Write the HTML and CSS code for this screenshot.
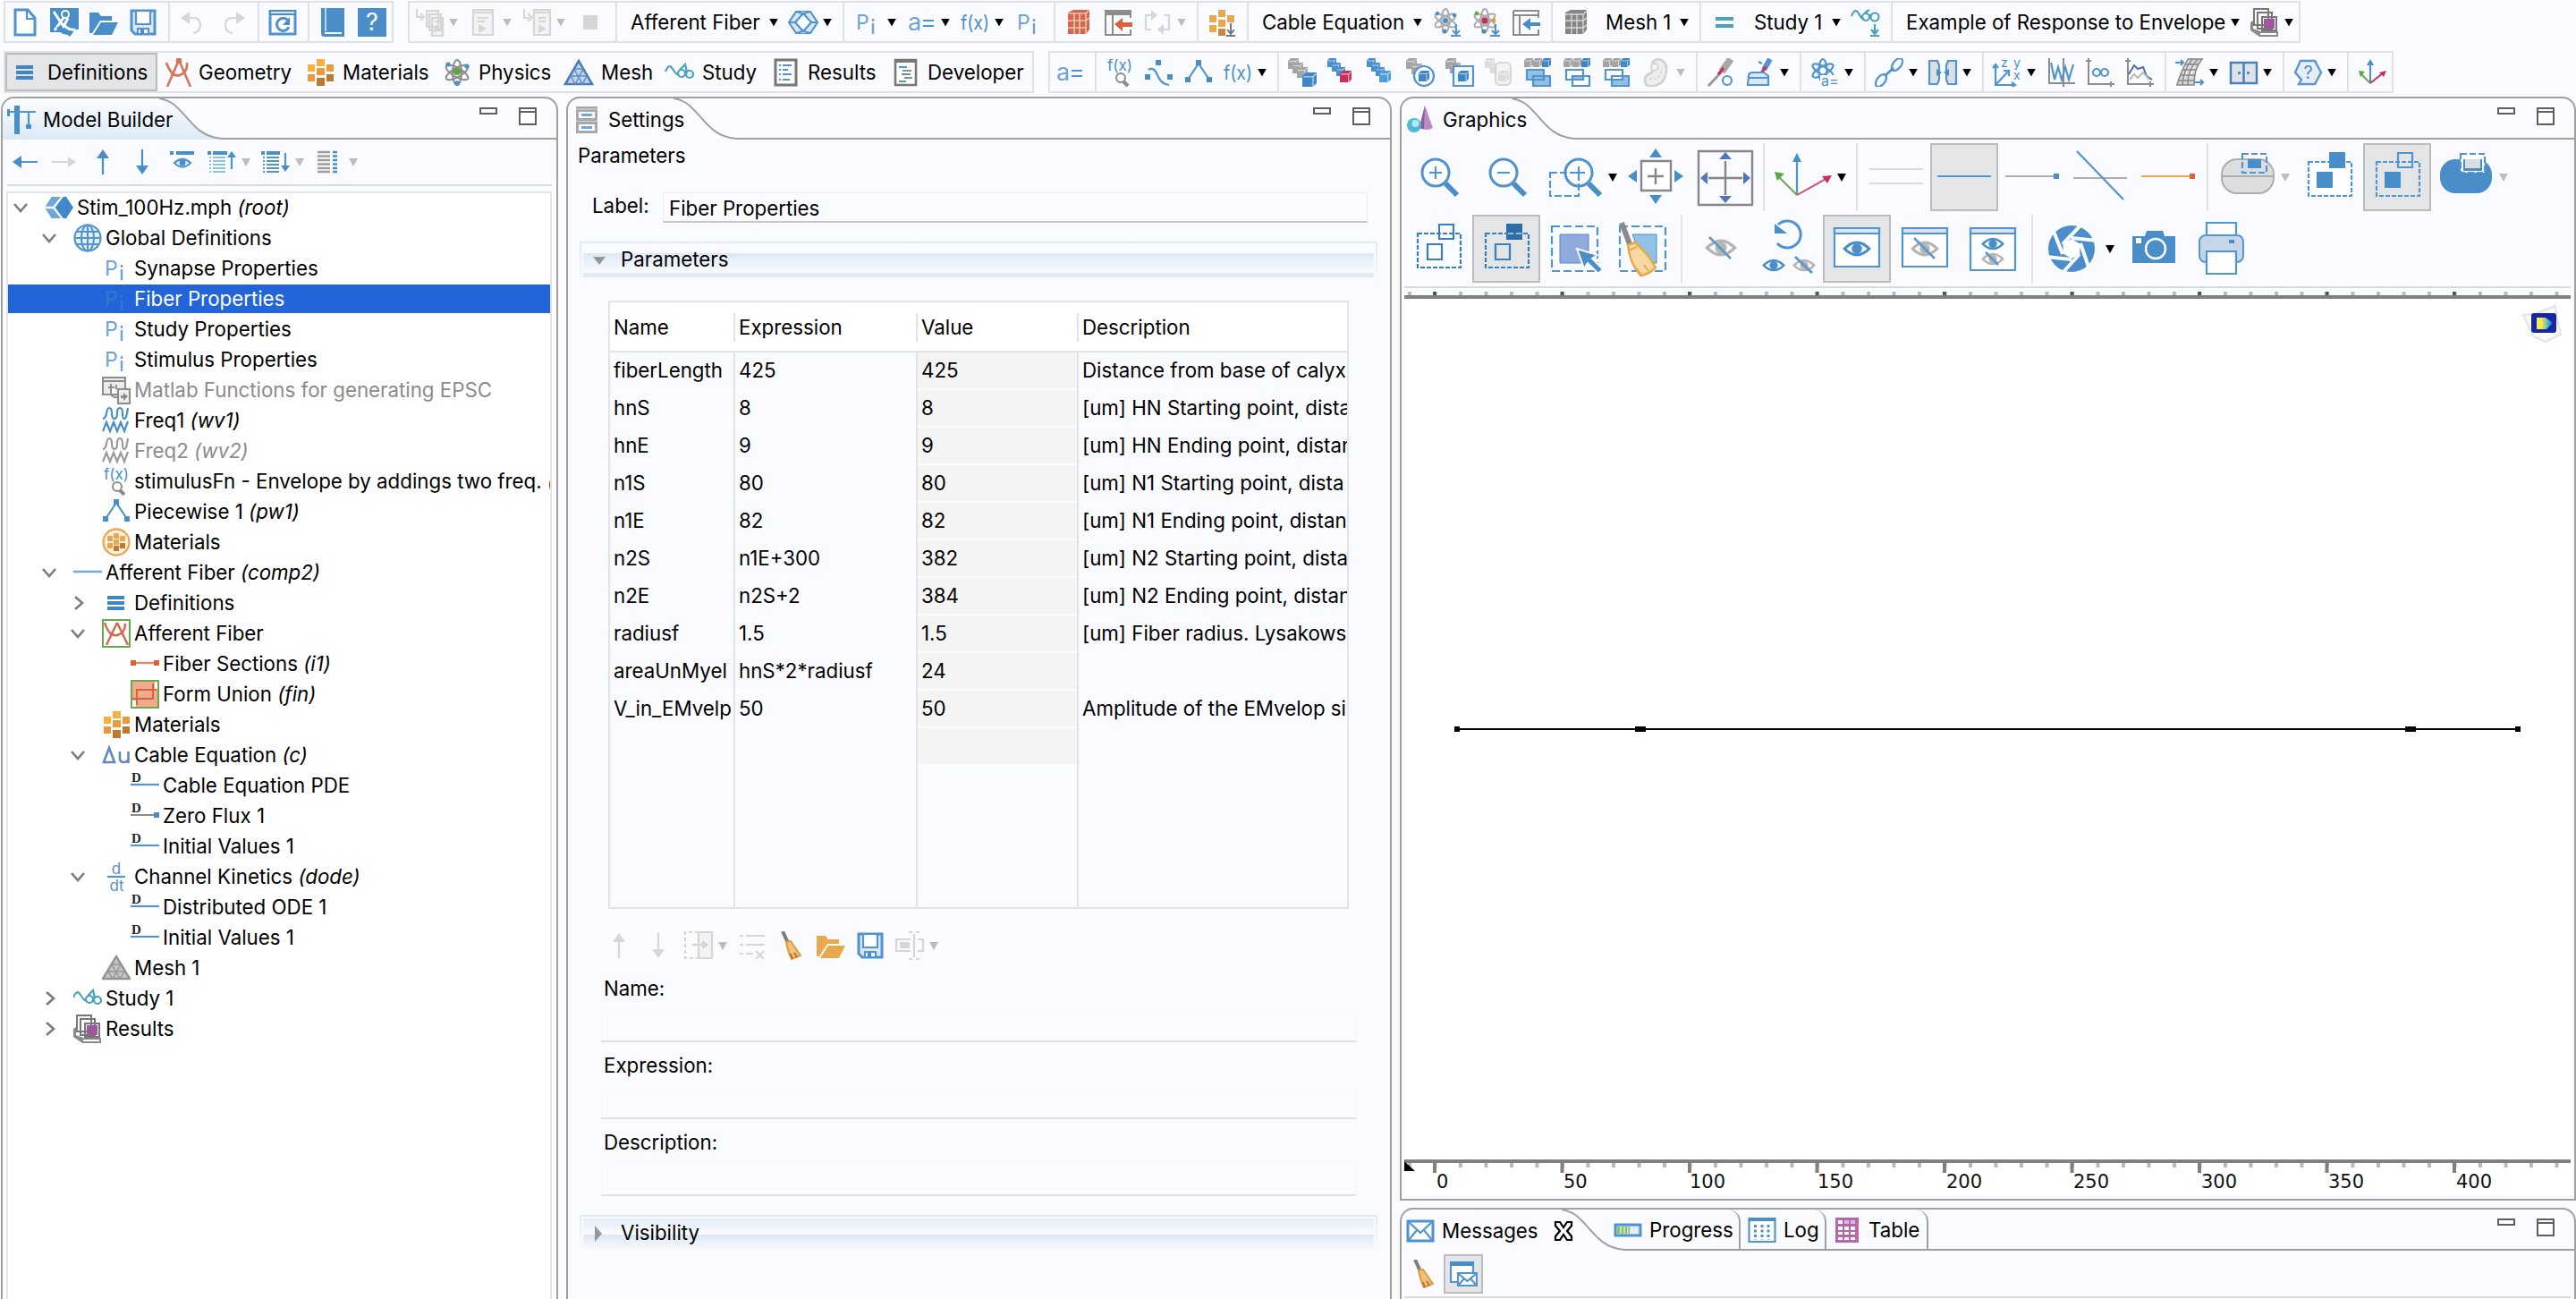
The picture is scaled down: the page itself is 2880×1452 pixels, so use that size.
FILE: index.html
```html
<!DOCTYPE html>
<html lang="en">
<head>
<meta charset="utf-8">
<title>Model Builder</title>
<link rel="stylesheet" href="styles.css">
</head>
<body>
<svg class="defs" aria-hidden="true">
  <symbol id="new" viewBox="0 0 32 32"><path class="s3 w" d="M5 2h14l8 9v19H5z"/><path class="s2" d="M18 2v10h9"/></symbol>
  <symbol id="builder" viewBox="0 0 32 32"><path class="b" d="M0 0h32v24h-4l-6 8-6-5H0z"/><circle cx="17" cy="7" r="4" fill="none" stroke="#fff" stroke-width="2"/><path d="M4 4l12 18M15 11L5 25M20 11l-4 8q4 6 12 5" fill="none" stroke="#fff" stroke-width="3"/><path d="M9 21q5 9 15 6" fill="none" stroke="#4a8ec9" stroke-width="4"/></symbol>
  <symbol id="open" viewBox="0 0 32 32"><path fill="currentColor" d="M0 5h10l3 4h12v5H12L3 28H0z"/><path fill="currentColor" d="M13 16h19l-7 14H4z"/></symbol>
  <symbol id="save" viewBox="0 0 32 32"><path class="s3" fill="#dbe8f4" d="M3 3h26v26H7l-4-4z"/><path class="s2 w" d="M8 3h16v15H8zM10 23h12v6H10z"/><path class="b" d="M13 24h4v5h-4z"/></symbol>
  <symbol id="undo" viewBox="0 0 32 32"><path class="dg2" d="M4 11h12q8 0 8 8t-8 9"/><path class="dg" d="M12 4v14L2 11z"/></symbol>
  <symbol id="redo" viewBox="0 0 32 32"><path class="dg2" d="M28 11H16q-8 0-8 8t8 9"/><path class="dg" d="M20 4v14l10-7z"/></symbol>
  <symbol id="refresh" viewBox="0 0 32 32"><path class="s3 w" d="M2 4h28v25H2z"/><path class="b" d="M1 2h30v6H1z"/><path stroke="#dbe8f4" stroke-width="2" d="M3 5h26"/><path class="s3" d="M22 14a7 7 0 1 0 1 7"/><path class="b" d="M24 10v9h-8z"/></symbol>
  <symbol id="book" viewBox="0 0 32 32"><path class="b" d="M3 0h26v32H6q-3 0-3-4z"/><path stroke="#b9d5ee" stroke-width="2" d="M8 0v26"/><path stroke="#fff" stroke-width="2" d="M7 28h19"/></symbol>
  <symbol id="help" viewBox="0 0 32 32"><path class="b" d="M0 0h32v32H0z"/><text x="16" y="25" text-anchor="middle" font-size="27" fill="#fff">?</text></symbol>
  <symbol id="runstack" viewBox="0 0 32 32"><path class="dg2 f" d="M13 3h13v18H13zM16 7h13v18H16zM19 11h12v20H19z"/><path class="dg2" d="M2 1v9h6M6 6l4 4-4 4"/><path class="dg" d="M22 19l6 4-6 5z"/><path class="dg2" d="M22 15h6"/></symbol>
  <symbol id="rundoc" viewBox="0 0 32 32"><path class="dg2 f" d="M5 2h22v28H5z"/><path class="dg2" d="M5 5h22M10 11h12M10 15h8"/><path class="dg" d="M11 18l9 5-9 5z"/></symbol>
  <symbol id="rundoc2" viewBox="0 0 32 32"><path class="dg2 f" d="M13 2h18v28H13z"/><path class="dg2" d="M13 5h18M18 11h8M18 15h8M2 1v10h6M6 6l5 5-5 4"/><path class="dg" d="M18 18l9 5-9 5z"/></symbol>
  <symbol id="stop" viewBox="0 0 32 32"><path class="dg" d="M8 8h16v16H8z"/></symbol>
  <symbol id="comp" viewBox="0 0 32 32"><path class="s2" fill="#eaf2fa" d="M8 4h16l8 12-8 12H8L0 16z"/><path class="s2 w" d="M16 6l9 10-9 10-9-10zM8 4l8 2 8-2M8 28l8-2 8 2M0 16h7M25 16h7"/></symbol>
  <symbol id="pi" viewBox="0 0 32 32"><text x="3" y="24" font-size="23" fill="#6fa3d6">P</text><path stroke="#6fa3d6" stroke-width="2.4" d="M22 17v12M22 12v3"/></symbol>
  <symbol id="pisel" viewBox="0 0 32 32"><text x="3" y="24" font-size="23" fill="#3577cf">P</text><path stroke="#3577cf" stroke-width="2.4" d="M22 17v12M22 12v3"/></symbol>
  <symbol id="aeq" viewBox="0 0 32 32"><text x="1" y="25" font-size="27" fill="#6fa3d6">a</text><path class="s2" d="M18 14h12M18 20h12"/></symbol>
  <symbol id="fx" viewBox="0 0 32 32"><text x="0" y="24" font-size="22" textLength="32" lengthAdjust="spacingAndGlyphs" fill="#4a8ec9">f(x)</text></symbol>
  <symbol id="fxq" viewBox="0 0 32 32"><text x="2" y="14" font-size="17" textLength="28" lengthAdjust="spacingAndGlyphs" fill="#4a8ec9">f(x)</text><circle class="g2" cx="17" cy="22" r="5"/><path class="g3" d="M20 26l5 5"/></symbol>
  <symbol id="geomblk" viewBox="0 0 32 32"><path fill="#d0684c" d="M4 5l6-3h18v22l-4 5H4z"/><path stroke="#f0c1b2" stroke-width="1.6" fill="none" d="M4 6h20l4-4M24 6v23M11 6v23M17 6v23M4 14h20l4-3M4 22h20"/></symbol>
  <symbol id="winred" viewBox="0 0 32 32"><path class="g2" d="M2 3h28v8M30 24v6H2V3"/><path class="gf" d="M1 2h30v6H1z"/><path class="g2" d="M10 8v22"/><path fill="#d9623a" d="M12 18l9-7v5h11v5H21v5z"/></symbol>
  <symbol id="winblue" viewBox="0 0 32 32"><path class="g2" d="M2 3h28v8M30 24v6H2V3"/><path class="g2" d="M2 8h28M9 8v22"/><path class="b" d="M12 18l9-7v5h11v4H21v5z"/></symbol>
  <symbol id="cycle" viewBox="0 0 32 32"><path class="dg2" stroke-width="3" d="M12 8H3v16h6M20 24h9V8h-6"/><path class="dg" d="M9 2l7 6-7 6zM23 18v12l-7-6z"/></symbol>
  <symbol id="mats" viewBox="0 0 32 32"><path fill="#f3b13f" d="M12 1h9v8h-9zM2 7h8v8H2z"/><path fill="#e89a3c" d="M23 7h8v8h-8zM12 11h9v8h-9zM2 18h8v8H2z"/><path fill="#c07a30" d="M23 18h8v8h-8zM12 22h9v9h-9z"/></symbol>
  <symbol id="matsadd" viewBox="0 0 32 32"><path fill="#e8a850" d="M12 2h8v8h-8zM2 8h8v8H2zM22 8h8v8h-8zM12 13h8v8h-8zM2 19h8v8H2z"/><path fill="#c98a3e" d="M12 23h8v8h-8z"/><path class="gd" d="M21 31h10M26 17v12M22 24l4 5 4-5"/></symbol>
  <symbol id="atom" viewBox="0 0 32 32"><g class="g2"><ellipse cx="16" cy="16" rx="5" ry="14"/><ellipse cx="16" cy="16" rx="5" ry="14" transform="rotate(60 16 16)"/><ellipse cx="16" cy="16" rx="5" ry="14" transform="rotate(-60 16 16)"/></g><circle cx="16" cy="15" r="4" fill="#5aa640"/><g class="b"><circle cx="6" cy="7" r="2.6"/><circle cx="27" cy="9" r="2.6"/><circle cx="16" cy="28" r="2.8"/></g></symbol>
  <symbol id="atomadd" viewBox="0 0 32 32"><g class="g2l"><ellipse cx="14" cy="14" rx="4.5" ry="13"/><ellipse cx="14" cy="14" rx="4.5" ry="13" transform="rotate(60 14 14)"/><ellipse cx="14" cy="14" rx="4.5" ry="13" transform="rotate(-60 14 14)"/></g><g class="b"><circle cx="14" cy="14" r="3"/><circle cx="5" cy="6" r="2.2"/><circle cx="24" cy="8" r="2.2"/><circle cx="13" cy="26" r="2.6"/></g><path class="s2" d="M20 31h11M26 18v12M22 25l4 4 4-4"/></symbol>
  <symbol id="atommulti" viewBox="0 0 32 32"><g class="g2l"><ellipse cx="14" cy="14" rx="4.5" ry="13"/><ellipse cx="14" cy="14" rx="4.5" ry="13" transform="rotate(60 14 14)"/><ellipse cx="14" cy="14" rx="4.5" ry="13" transform="rotate(-60 14 14)"/></g><circle cx="14" cy="14" r="3.6" fill="#c8305c"/><circle cx="5" cy="6" r="2.4" fill="#6aa84f"/><circle cx="24" cy="14" r="2.4" fill="#e8963c"/><circle class="b" cx="13" cy="26" r="2.6"/><path class="s2" d="M20 31h11M26 18v12M22 25l4 4 4-4"/></symbol>
  <symbol id="meshblk" viewBox="0 0 32 32"><path fill="#858585" d="M4 5l6-3h18v22l-4 5H4z"/><path stroke="#d5d5d5" stroke-width="1.4" fill="none" d="M4 7h20l4-4M24 6v23M11 6v23M17 6v23M4 14h20l4-3M4 22h20l4-3"/></symbol>
  <symbol id="teq" viewBox="0 0 32 32"><path fill="#4ba0bc" d="M6 10h20v4H6zM6 18h20v4H6z"/></symbol>
  <symbol id="study" viewBox="0 0 32 32"><g fill="none" stroke="#4ba0bc" stroke-width="2.2"><path d="M0 15q4-10 8-3 5 8 7 6"/><circle cx="18" cy="17" r="4"/><circle cx="27" cy="18" r="4"/><path d="M16 13l6-6 2 8M22 15h2"/></g></symbol>
  <symbol id="studyadd" viewBox="0 0 32 32"><g fill="none" stroke="#4ba0bc" stroke-width="2.2"><path d="M0 9q4-10 8-3 4 8 6 5"/><circle cx="16" cy="10" r="4"/><circle cx="26" cy="10" r="4.5"/><path d="M15 5l5-3M20 8h2M26 18v10M22 24l4 5 4-5M21 31h10"/></g></symbol>
  <symbol id="results" viewBox="0 0 32 32"><path class="gd f2" d="M4 1h16v18H4zM8 5h16v18H8zM13 10h16v15H13z"/><path fill="#a0569e" d="M15 12h12v11H15z"/><path fill="#8a8a8a" d="M0 16l3-2v9l8 3h20v6H10L0 25z"/><path class="w" d="M11 28h18v2H11z"/></symbol>
  <symbol id="defs" viewBox="0 0 32 32"><path fill="#3f86c6" d="M6 8h19v4H6zM6 14h19v4H6zM6 20h19v4H6z"/></symbol>
  <symbol id="geom" viewBox="0 0 32 32"><g fill="none" stroke="#d8745a" stroke-width="2.6"><path d="M16 2L3 32M16 2l13 30M2 5q6 17 15 14t8-14" /><circle cx="16" cy="3" r="2"/></g></symbol>
  <symbol id="mesh" viewBox="0 0 32 32"><path d="M16 3L1 29h30z" fill="#c7d3e4" stroke="#4a7fbd" stroke-width="2.6"/><path d="M11 12h10M7 20h18M11 12l9 17M21 12l-9 17M7 20l5 9M25 20l-5 9" fill="none" stroke="#5d8ec8" stroke-width="1.5"/></symbol>
  <symbol id="meshg" viewBox="0 0 32 32"><path d="M16 3L1 28h30z" fill="#c4c4c4" stroke="#929292" stroke-width="2.4"/><path d="M11 12h10M7 20h18M11 12l9 16M21 12l-9 16M7 20l5 8M25 20l-5 8" fill="none" stroke="#969696" stroke-width="1.4"/></symbol>
  <symbol id="resdoc" viewBox="0 0 32 32"><path class="w" stroke="#777" stroke-width="3" d="M5 2h23v28H5z"/><path class="s2" d="M9 8h2M13 8h10M9 13h2M13 13h6M9 18h2M13 18h10M9 24h2M13 24h8"/></symbol>
  <symbol id="devdoc" viewBox="0 0 32 32"><path class="w" stroke="#777" stroke-width="2.6" d="M5 2h23v28H5z"/><path fill="#777" d="M4 1h25v4H4z"/><path class="s2" d="M9 10h9M12 18h10M9 26h8"/><path class="g2" d="M13 14h10M15 22h9"/></symbol>
  <symbol id="interp" viewBox="0 0 32 32"><path class="s2" d="M4 13q6-4 10 6t13 11"/><path class="b" d="M12 2h6v6h-6zM0 18h6v6H0zM25 18h6v6h-6z"/></symbol>
  <symbol id="piece" viewBox="0 0 32 32"><path class="s2" d="M4 24L16 6l12 18"/><path class="b" d="M13 2h6v6h-6zM1 21h6v6H1zM25 21h6v6h-6z"/></symbol>
  <symbol id="cube" viewBox="0 0 12 12"><path d="M0 3l3-3h9v9l-3 3H0z" fill="currentColor"/><path d="M1 3.6h8L11.500 1M9 3.600V12" fill="none" stroke="#fff" stroke-opacity=".65"/></symbol>
  <symbol id="sel1" viewBox="0 0 32 32"><g color="#a5a5a5"><use href="#cube" width="12" height="12"/><use href="#cube" x="5" y="5" width="12" height="12"/><use href="#cube" x="10" y="10" width="12" height="12"/></g><use href="#cube" x="16" y="16" width="16" height="16" color="#3f86c6"/></symbol>
  <symbol id="sel2" viewBox="0 0 32 32"><g color="#4a8ed0"><use href="#cube" width="10" height="10"/><use href="#cube" x="5" y="5" width="10" height="10"/><use href="#cube" x="10" y="10" width="10" height="10"/></g><use href="#cube" x="14" y="14" width="13" height="13" color="#c8305c"/></symbol>
  <symbol id="sel3" viewBox="0 0 32 32"><g color="#4a8ed0"><use href="#cube" width="10" height="10"/><use href="#cube" x="5" y="5" width="10" height="10"/><use href="#cube" x="10" y="10" width="10" height="10"/></g><use href="#cube" x="14" y="14" width="13" height="13" color="#4a9fdb"/></symbol>
  <symbol id="sel4" viewBox="0 0 32 32"><g color="#a5a5a5"><use href="#cube" width="12" height="12"/><use href="#cube" x="6" y="6" width="12" height="12"/></g><circle class="s2 w" cx="20" cy="20" r="11"/><use href="#cube" x="14" y="14" width="12" height="12" color="#3f86c6"/></symbol>
  <symbol id="sel5" viewBox="0 0 32 32"><g color="#a5a5a5"><use href="#cube" width="12" height="12"/><use href="#cube" x="5" y="5" width="12" height="12"/></g><path class="s2 f2" d="M9 9h22v22H9z"/><use href="#cube" x="14" y="14" width="12" height="12" color="#3f86c6"/></symbol>
  <symbol id="sel6" viewBox="0 0 32 32"><g color="#dcdcdc"><use href="#cube" width="11" height="11"/><use href="#cube" x="6" y="6" width="11" height="11"/><rect class="dg2 f" x="12" y="5" width="17" height="25" rx="5"/><use href="#cube" x="15" y="14" width="12" height="12"/></g></symbol>
  <symbol id="sel7" viewBox="0 0 32 32"><g color="#a5a5a5"><use href="#cube" width="10" height="10"/><use href="#cube" x="10" width="10" height="10"/></g><use href="#cube" x="20" width="10" height="10" color="#3f86c6"/><path class="s2" fill="#92c1e6" d="M3 13h19v11H3zM10 20h19v11H10z"/><path class="s2" d="M10 24h12"/></symbol>
  <symbol id="sel8" viewBox="0 0 32 32"><g color="#a5a5a5"><use href="#cube" width="10" height="10"/><use href="#cube" x="10" width="10" height="10"/></g><use href="#cube" x="20" width="10" height="10" color="#3f86c6"/><path class="s2 w" d="M3 13h19v11H3zM10 20h19v11H10z"/><path class="s2" fill="#92c1e6" d="M10 20h12v4H10z"/></symbol>
  <symbol id="sel9" viewBox="0 0 32 32"><g color="#a5a5a5"><use href="#cube" width="10" height="10"/><use href="#cube" x="10" width="10" height="10"/></g><use href="#cube" x="20" width="10" height="10" color="#3f86c6"/><path class="s2 w" d="M3 13h19v11H3z"/><path class="s2" fill="#92c1e6" d="M10 20h19v11H10z"/><path class="w s2" d="M10 20h12v4H10z"/></symbol>
  <symbol id="blob" viewBox="0 0 32 32"><path fill="#eee" stroke="#cfcfcf" stroke-width="2.4" d="M11 10q-1-8 7-9 10 2 9 13-1 14-13 17-10 2-11-5t8-10z"/><circle cx="14" cy="10" r="4" class="dg2 f"/><path class="dg2" stroke-dasharray="3 2" d="M8 23q12 3 14-11"/></symbol>
  <symbol id="probe" viewBox="0 0 32 32"><path stroke="#a8a8a8" stroke-width="8" d="M27 1L17 15"/><path stroke="#9a9a9a" stroke-width="3" d="M18 14L2 31"/><path stroke="#c8305c" stroke-width="3" d="M13 18l6-7"/><circle class="s2" cx="23" cy="25" r="5"/></symbol>
  <symbol id="probe2" viewBox="0 0 32 32"><path stroke="#5d8fc9" stroke-width="6" d="M27 1l-7 12"/><path stroke="#c8305c" stroke-width="3" d="M22 10l-6 8"/><path class="s2" fill="#dbe8f4" d="M3 20q0-4 5-4h12l5 4v10H2zM3 22h22M14 4l4 2"/></symbol>
  <symbol id="atoma" viewBox="0 0 32 32"><g class="s2"><ellipse cx="14" cy="14" rx="4.500" ry="13"/><ellipse cx="14" cy="14" rx="4.500" ry="13" transform="rotate(60 14 14)"/><ellipse cx="14" cy="14" rx="4.500" ry="13" transform="rotate(-60 14 14)"/></g><path fill="#fafbff" d="M11 19h21v13H11z"/><text x="12" y="31" font-size="16" fill="#4a8ec9">a=</text></symbol>
  <symbol id="link" viewBox="0 0 32 32"><g class="s2"><ellipse cx="25" cy="7" rx="4.500" ry="8" transform="rotate(38 25 7)"/><ellipse cx="7" cy="25" rx="4.500" ry="8" transform="rotate(38 7 25)"/></g><path class="s3" d="M11 20l10-9"/></symbol>
  <symbol id="pair" viewBox="0 0 32 32"><path class="s2" fill="#dfe3e8" d="M1 3h9l2 5v16l-2 5H1zM31 3h-9l-2 5v16l2 5h9z"/><path class="b" d="M9 12l6 4-6 4zM23 12l-6 4 6 4z"/></symbol>
  <symbol id="zyx" viewBox="0 0 32 32"><path class="s2" d="M3 8v22h22M3 30L18 14M12 14h6v6M0 11l3-4 3 4M21 27l4 3-4 2"/><g font-size="14" fill="#4a8ec9"><text x="9" y="10">z</text><text x="23" y="10">y</text><text x="23" y="24">x</text></g></symbol>
  <symbol id="wavep" viewBox="0 0 32 32"><path class="g2" d="M3 0v28h29M19 0v32"/><path class="s2" d="M5 5l4 19 4-14 4 14 4-14 4 14 5-17"/></symbol>
  <symbol id="infp" viewBox="0 0 32 32"><path class="g2" d="M3 0v29h29M0 3h6M28 26v6"/><g class="s2"><circle cx="12" cy="16" r="4"/><circle cx="21" cy="16" r="4"/></g></symbol>
  <symbol id="peak" viewBox="0 0 32 32"><path class="g2" d="M3 0v29h29M0 3h6M28 26v6"/><path fill="none" stroke="#4a6ea8" stroke-width="2" d="M4 18l6-10 4 4 6-2 4 10 6 4"/><path fill="none" stroke="#bbb" stroke-width="2" d="M5 24l5-6 4 4 6-6 7 8"/></symbol>
  <symbol id="meshmap" viewBox="0 0 32 32"><path fill="#d5d5d5" stroke="#858585" stroke-width="1.500" d="M14 1h16q-9 10-9 29H2Q4 20 14 1zM19 1Q9 14 8 30M25 1Q14 14 14 30M11 7h15M8 13h16M5 19h17M3 25h18"/><path class="s2" d="M0 5h9M6 2l3 3-3 3M22 27h9M28 24l3 3-3 3"/></symbol>
  <symbol id="cab" viewBox="0 0 32 32"><path fill="#dfe3e8" stroke="#4a7fbd" stroke-width="2.500" d="M2 5h29v23H2zM16.500 5v23"/><path class="b" d="M10 15h3v3h-3zM20 15h3v3h-3z"/></symbol>
  <symbol id="ask" viewBox="0 0 32 32"><path fill="#e6eff8" stroke="#5b96d0" stroke-width="2.400" d="M8 3h16l7 13-7 13H6l3-5L2 16z"/><text x="16.500" y="23" text-anchor="middle" font-size="20" fill="#4a8ec9">?</text></symbol>
  <symbol id="axes" viewBox="0 0 32 32"><path stroke="#4a8ec9" stroke-width="2" d="M14 28V5"/><path class="b" d="M10 8l4-7 4 7z"/><path stroke="#6aa84f" stroke-width="2" d="M14 28L3 17"/><path fill="#5aa640" d="M1 14l7 1-5 6z"/><path stroke="#c8305c" stroke-width="2" d="M14 28l15-12"/><path fill="#c8305c" d="M32 14l-3 7-5-5z"/></symbol>
  <symbol id="aleft" viewBox="0 0 32 32"><path class="s2" d="M8 16h22"/><path class="b" d="M2 16l10-7v14z"/></symbol>
  <symbol id="aright" viewBox="0 0 32 32"><path class="dg2" d="M2 16h22"/><path class="dg" d="M29 16l-9-6v12z"/></symbol>
  <symbol id="aup" viewBox="0 0 32 32"><path class="cs" d="M15 30V8"/><path fill="currentColor" d="M15 2l7 10H8z"/></symbol>
  <symbol id="adown" viewBox="0 0 32 32"><path class="cs" d="M15 2v22"/><path fill="currentColor" d="M15 30l7-10H8z"/></symbol>
  <symbol id="eyesm" viewBox="0 0 32 32"><path class="b" d="M2 4h4v4H2zM9 4h20v4H9z"/><path class="s2 w" d="M7 17q9-8 18 0-9 9-18 0z"/><circle class="b" cx="16" cy="17" r="3.500"/></symbol>
  <symbol id="lup" viewBox="0 0 32 32"><path class="b" d="M0 4h4v4H0zM6 4h16v4H6z"/><path stroke="#92bfe4" stroke-width="2" d="M2 11h2M6 11h14M2 15h2M6 15h14M2 19h2M6 19h14M2 23h2M6 23h14M2 27h2M6 27h14"/><path class="s2" d="M27 24V8"/><path class="b" d="M27 4l5 7H22z"/></symbol>
  <symbol id="ldown" viewBox="0 0 32 32"><path class="b" d="M0 4h4v4H0zM6 4h15v4H6z"/><path class="s2" d="M2 11h2M6 11h14M2 15h2M6 15h14M2 19h2M6 19h14M2 23h2M6 23h14M2 27h2M6 27h14M27 6v16"/><path class="b" d="M27 27l5-7H22z"/></symbol>
  <symbol id="cols" viewBox="0 0 32 32"><path stroke="#9c9c9c" stroke-width="2.600" d="M3 5h14M3 9.500h14M3 14h14M3 18.500h14M3 23h14M3 27h14"/><path stroke="#4a8ec9" stroke-width="2.600" d="M20 5h5M20 9.500h5M20 14h5M20 18.500h5M20 23h5M20 27h5"/></symbol>
  <symbol id="crane" viewBox="0 0 32 32"><path class="b" d="M8 0h6v32H8zM0 4h3v8H0zM21 21h6v5h-6z"/><path class="s2" d="M2 7h30M24 7v15"/></symbol>
  <symbol id="setico" viewBox="0 0 32 32"><path fill="#a9a9a9" d="M4 1h24v30H4z"/><path class="w" d="M7 7h18v7H7zM7 21h18v7H7z"/><path fill="#6fa8dc" d="M10 9h12v3H10zM10 23h12v3H10z"/><path stroke="#fff" stroke-opacity=".5" d="M4 4h24M4 17.500h24"/></symbol>
  <symbol id="gfx" viewBox="0 0 32 32"><path fill="#b98cc4" d="M20 0l9 25q-6 4-15 0z"/><path fill="#8d5c9c" d="M20 0l-6 24q2 3 5 2z"/><circle cx="8" cy="22" r="8" fill="#4cb9d6"/><circle cx="9.500" cy="20" r="4" fill="#b6e8f4"/></symbol>
  <symbol id="root" viewBox="0 0 32 32"><path fill="#4088c8" d="M8 4h16l8 12-8 12H8L0 16z"/><path fill="#6fa8db" d="M9 4h8L9 16l8 12H9L0 16z"/><path stroke="#fff" stroke-width="2.400" fill="none" d="M0 16h10M20 3l-10 13 10 13"/></symbol>
  <symbol id="globe" viewBox="0 0 32 32"><g class="s2"><circle cx="16" cy="16" r="14.500" fill="#e6f0fa"/><ellipse cx="16" cy="16" rx="7" ry="14.500"/><path d="M16 1.500v29M2 16h28M4 9h24M4 23h24"/></g></symbol>
  <symbol id="matlab" viewBox="0 0 32 32"><path class="g2 f3" d="M1 2h25v19H1zM1 6h25M10 9v10q0 6 8 5M7 13h7M16 10v5"/><path class="g2 f3" d="M18 15h13v16H18z"/><path class="gf" d="M21 22h3v-3l5 4-5 5v-3h-3z"/></symbol>
  <symbol id="wave" viewBox="0 0 32 32"><path class="cs" d="M1 14Q4 14 5 8t3-6q3 0 3 6t3 6 3-6 3-6 3 6 2 6 3-6l1-6M1 28l4-10 4 10 4-10 4 10 4-10 4 10 4-11"/></symbol>
  <symbol id="matc" viewBox="0 0 32 32"><circle cx="16" cy="16" r="14.500" fill="#fdf1e0" stroke="#e8a850" stroke-width="2.400"/><path fill="#e8a850" d="M13 6h6v6h-6zM6 9h6v6H6zM20 9h6v6h-6zM13 13h6v6h-6zM6 17h6v6H6z"/><path fill="#c07a30" d="M20 17h6v6h-6zM13 20h6v6h-6z"/></symbol>
  <symbol id="line" viewBox="0 0 32 32"><path stroke="#7aabdb" stroke-width="2.600" d="M0 15h32"/></symbol>
  <symbol id="geombox" viewBox="0 0 32 32"><path fill="#fff" stroke="#6aa84f" stroke-width="2" d="M1 1h30v30H1z"/><path fill="none" stroke="#d0684c" stroke-width="2.400" d="M17 4L5 29M17 4l12 25M3 4q5 16 14 14t9-13"/></symbol>
  <symbol id="fsec" viewBox="0 0 32 32"><path stroke="#e08a6a" stroke-width="2.400" d="M3 15h26"/><path fill="#d9623a" d="M0 12h6v6H0zM26 12h6v6h-6z"/></symbol>
  <symbol id="union" viewBox="0 0 32 32"><path fill="#f0ab8e" stroke="#6aa84f" stroke-width="2" d="M1 1h30v30H1z"/><path fill="#fff" d="M27 2h3v8h-3zM2 23h4v7H2z"/><path fill="none" stroke="#d9623a" stroke-width="2" d="M2 21h23V4M7 28V11h22"/></symbol>
  <symbol id="du" viewBox="0 0 32 32"><path fill="none" stroke="#6288bd" stroke-width="2.600" d="M2 24L8 8l6 16zM20 12v8q0 4 4.500 4t5-4v-8M29.500 12v13"/></symbol>
  <symbol id="dline" viewBox="0 0 32 32"><text x="1" y="12" class="dser">D</text><path class="s2" d="M0 15h32"/></symbol>
  <symbol id="dpoint" viewBox="0 0 32 32"><text x="1" y="12" class="dser">D</text><path class="g2" d="M0 15h28"/><path class="b" d="M26 12h6v6h-6z"/></symbol>
  <symbol id="ddt" viewBox="0 0 32 32"><g font-size="17" fill="#6288bd" text-anchor="middle"><text x="16" y="13">d</text><text x="16.500" y="32">dt</text></g><path class="s2" d="M6 16h20"/></symbol>
  <symbol id="insert" viewBox="0 0 32 32"><path class="dg2 f" d="M16 1h15v29H16z"/><path class="dg2" stroke-dasharray="4 3" d="M16 1H1v29h15"/><path class="dg2" d="M8 15h16"/><path class="dg" d="M27 15l-7-5v10z"/></symbol>
  <symbol id="clearl" viewBox="0 0 32 32"><path class="dg2" stroke-width="3" d="M2 5h4M9 5h21M2 15h4M9 15h21M2 25h4M9 25h8M20 22l9 9M29 22l-9 9"/></symbol>
  <symbol id="broom" viewBox="0 0 32 32"><path stroke="#7d7d7d" stroke-width="4" d="M6 0l6 13"/><path fill="#f3c27a" stroke="#e09a44" stroke-width="2" d="M10 12l5-1 11 16-10 4q-4-8-6-19z"/><path stroke="#b87330" stroke-width="2" d="M17 31l-2-6M22 29l-3-5"/></symbol>
  <symbol id="rename" viewBox="0 0 32 32"><path class="dg2" d="M17 9H1v13h16M25 9h6v13h-6M21 3v26M15 1h4M23 1h4M15 31h4M23 31h4"/><path class="dg" d="M5 12h11v7H5z"/></symbol>
  <symbol id="mail" viewBox="0 0 32 32"><path class="s3 w" d="M2 5h28v22H2z"/><path class="s2" d="M3 6l13 12L29 6M3 26l9-11M29 26l-9-11"/></symbol>
  <symbol id="prog" viewBox="0 0 32 32"><path class="s3" fill="#e4e4e4" d="M2 10h28v12H2z"/><path fill="#8bc36a" d="M4 12h14v8H4z"/><path stroke="#fff" d="M8 12v8M12 12v8M16 12v8M21 12v8M25 12v8"/></symbol>
  <symbol id="log" viewBox="0 0 32 32"><path class="s2 w" d="M1.500 3h29v26h-29z"/><path class="b" d="M1 2h30v4H1z"/><path class="s3" stroke-dasharray="3 2.500" d="M8.500 10v17M16 10v17M23 10v17"/></symbol>
  <symbol id="table" viewBox="0 0 32 32"><path fill="#b568ac" d="M3 2h26v28H3z"/><path class="w" d="M6 5h5v4H6zM6 12h5v4H6zM13 12h5v4h-5zM20 12h5v4h-5zM6 18h5v3H6zM13 18h5v3h-5zM20 18h5v3h-5zM6 24h5v3H6zM13 24h5v3h-5zM20 24h5v3h-5z"/><path fill="#dfb8da" d="M13 5h5v4h-5zM20 5h5v4h-5z"/></symbol>
  <symbol id="winmail" viewBox="0 0 32 32"><path class="s2 w" d="M2 3h25v22H2z"/><path class="b" d="M1 2h27v5H1z"/><path class="s2 w" d="M10 15h21v14H10z"/><path class="s2" d="M11 16l9.500 8L30 16M11 28l6-7M30 28l-6-7"/></symbol>
  <symbol id="xclose" viewBox="0 0 32 32"><path fill="#fff" stroke="#000" stroke-width="2.200" d="M7 6h5l4 6 4-6h5v4l-5 6 5 6v4h-5l-4-6-4 6H7v-4l5-6-5-6z"/></symbol>

  <symbol id="eye" viewBox="0 0 36 20"><path fill="currentColor" d="M0 10Q18-9 36 10 18 29 0 10z"/><path class="w" d="M5 10Q18-2 31 10 18 22 5 10z"/><circle cx="18" cy="10" r="6.500" fill="currentColor"/></symbol>
  <symbol id="zin" viewBox="0 0 76 76"><path class="s5" d="M46 45l13 13"/><circle class="s3 w" cx="35" cy="33" r="15"/><path class="s2" d="M28 33h14M35 26v14"/></symbol>
  <symbol id="zout" viewBox="0 0 76 76"><path class="s5" d="M46 45l13 13"/><circle class="s3 w" cx="35" cy="33" r="15"/><path class="s2" d="M28 33h14"/></symbol>
  <symbol id="zbox" viewBox="0 0 76 76"><path class="s5" d="M54 45l13 13"/><circle class="s3 w" cx="43" cy="33" r="15"/><path class="s2" stroke-dasharray="8 3" d="M11 33h32v26H11z"/><path class="s2" d="M36 33h14M43 26v14"/></symbol>
  <symbol id="zext" viewBox="0 0 76 76"><path class="gd2 w" d="M21 20h33v33H21z"/><path class="gd2" d="M28 37h18M37 28v18"/><path class="b" d="M37 6l7 10H30zM37 68l7-10H30zM6 37l10-7v14zM68 37l-10-7v14z"/></symbol>
  <symbol id="zsel" viewBox="0 0 76 76"><path class="gd2" d="M9 9h60v60H9z"/><path class="gd2" d="M20 39h38M39 20v38"/><path fill="#5078b8" d="M39 10l7 8H32zM39 67l7-8H32zM11 39l8-7v14zM67 39l-8-7v14z"/></symbol>
  <symbol id="bigaxes" viewBox="0 0 76 76"><path class="s2" d="M31 58V16"/><path class="b" d="M31 11l5 10H26z"/><path stroke="#6aa84f" stroke-width="2" d="M31 58L10 37"/><path fill="#5aa640" d="M6 32l11 2-8 8z"/><path stroke="#d0486f" stroke-width="2" d="M31 58l34-19"/><path fill="#c8305c" d="M70 36l-5 9-6-8z"/></symbol>
  <symbol id="l1" viewBox="0 0 76 76"><path stroke="#dadada" stroke-width="2" d="M8 29h60M8 45h60"/></symbol>
  <symbol id="l2" viewBox="0 0 76 76"><path class="s2" d="M8 37h60"/></symbol>
  <symbol id="l3" viewBox="0 0 76 76"><path stroke="#adadad" stroke-width="2" d="M8 37h56"/><path class="b" d="M62 34h6v6h-6z"/></symbol>
  <symbol id="l4" viewBox="0 0 76 76"><path stroke="#adadad" stroke-width="2" d="M8 39h60"/><path class="s2" d="M12 9l52 54"/></symbol>
  <symbol id="l5" viewBox="0 0 76 76"><path stroke="#eaa95a" stroke-width="2" d="M8 37h56"/><path fill="#d9623a" d="M62 34h6v6h-6z"/></symbol>
  <symbol id="r1" viewBox="0 0 76 76"><rect x="10" y="18" width="58" height="38" rx="17" fill="#dcddde" stroke="#adadad" stroke-width="2"/><path stroke="#adadad" stroke-width="2" d="M10 37h58"/><path class="s2" stroke-dasharray="7 3" d="M33 12h27v21H33z"/><path class="b" d="M39 18h15v10H39z"/></symbol>
  <symbol id="r2" viewBox="0 0 76 76"><path class="s2 w" stroke-dasharray="5 2" d="M15 21h48v38H15z"/><path class="b" d="M38 10h18v18H38zM24 32h18v18H24z"/></symbol>
  <symbol id="r3" viewBox="0 0 76 76"><path class="s2" stroke-dasharray="5 2" d="M15 21h48v38H15z"/><path class="s2" d="M39 11h16v16H39z"/><path class="b" d="M24 32h18v18H24z"/></symbol>
  <symbol id="r4" viewBox="0 0 76 76"><rect class="b" x="10" y="18" width="58" height="38" rx="17"/><path class="w" d="M33 13h27v20H33z"/><path class="b" d="M36 18h21v13H36z"/><path class="s2" stroke-dasharray="7 3" d="M33 12h27v21H33z"/><path fill="#dcddde" d="M38 18h17v10H38z"/></symbol>
  <symbol id="q1" viewBox="0 0 76 76"><path class="k2" stroke-dasharray="5 2" d="M15 21h48v38H15z"/><path class="k2" d="M39 11h16v16H39zM26 33h16v17H26z"/></symbol>
  <symbol id="q2" viewBox="0 0 76 76"><path fill="#2d6ca5" d="M38 10h18v18H38z"/><path class="k2" stroke-dasharray="5 2" d="M15 21h48v38H15z"/><path class="k2" d="M26 33h16v17H26z"/><path stroke="#fff" stroke-dasharray="6 3" d="M40 21h15"/></symbol>
  <symbol id="q3" viewBox="0 0 76 76"><path class="s2" stroke-dasharray="9 4" d="M13 13h51v50H13z"/><path fill="#8faadb" stroke="#4a8ec9" d="M22 22h32v32H22z"/><path class="b" stroke="#fafbff" stroke-width="2" d="M41 38l23 7-6 4 12 12-5 5-12-12-4 6z"/></symbol>
  <symbol id="q4" viewBox="0 0 76 76"><path class="s2" stroke-dasharray="9 4" d="M13 13h51v50H13z"/><path fill="#92c1e6" stroke="#4a8ec9" d="M27 22h27v32H40z"/><path stroke="#8a8a8a" stroke-width="6" d="M15 9l9 24"/><path fill="#f9d9a3" stroke="#e8a850" stroke-width="2.500" d="M22 34l8-3q14 12 23 28-8 8-17 9-12-14-14-34z"/><path stroke="#e8a850" stroke-width="2" d="M23 40l9-4M32 60l5 8M40 56l5 7"/></symbol>
  <symbol id="e1" viewBox="0 0 76 76"><use href="#eye" x="20" y="27" width="36" height="20" color="#b4b4b4"/><path stroke="#5b96d0" stroke-width="2.500" d="M25 25l24 24"/></symbol>
  <symbol id="e2" viewBox="0 0 76 76"><path class="s3" d="M25 32a15 15 0 1 0 1-21"/><path class="b" d="M22 10v11h14z"/><use href="#eye" x="8" y="49" width="26" height="15" color="#4a8ec9"/><use href="#eye" x="42" y="49" width="26" height="15" color="#b4b4b4"/><path stroke="#5b96d0" stroke-width="3" d="M45 47l19 18"/></symbol>
  <symbol id="e3" viewBox="0 0 76 76"><path class="s2 w" d="M13 15h50v43H13z"/><path class="s2" fill="#dbe8f4" d="M13 15h50v6H13z"/><use href="#eye" x="22" y="29" width="32" height="18" color="#4a8ec9"/></symbol>
  <symbol id="e4" viewBox="0 0 76 76"><path class="s2 w" d="M13 15h50v43H13z"/><path class="s2" fill="#dcddde" d="M13 15h50v6H13z"/><use href="#eye" x="22" y="29" width="32" height="18" color="#b4b4b4"/><path stroke="#5b96d0" stroke-width="2.500" d="M26 26l23 23"/></symbol>
  <symbol id="e5" viewBox="0 0 76 76"><path class="s2 w" d="M13 15h50v47H13z"/><path class="s2" fill="#dcddde" d="M13 15h50v6H13z"/><use href="#eye" x="25" y="25" width="26" height="15" color="#4a8ec9"/><use href="#eye" x="25" y="42" width="26" height="15" color="#b4b4b4"/><path stroke="#5b96d0" stroke-width="2.500" d="M30 42l14 14"/></symbol>
  <symbol id="aperture" viewBox="0 0 76 76"><circle class="b" cx="38" cy="38" r="26"/><path class="w" d="M38 27l9.500 5.500v11L38 49l-9.500-5.500v-11z"/><path stroke="#fafbff" stroke-width="4" d="M28 44L17 16M28 33l21-22M38 26l29 3M48 32l10 29M47 44L27 66M38 50L9 47"/></symbol>
  <symbol id="camera" viewBox="0 0 76 76"><path class="b" d="M14 24h14l2-6h18l2 6h12v30H14z"/><ellipse cx="40" cy="38" rx="11" ry="11" class="b" stroke="#fff" stroke-width="2.500"/><path class="w" d="M18 26h6v6h-6z"/></symbol>
  <symbol id="printer" viewBox="0 0 76 76"><rect x="13" y="23" width="49" height="30" rx="7" fill="#c5d6e8" stroke="#5b96d0" stroke-width="2"/><path class="s2 w" d="M21 9h33v14H21zM21 41h33v25H21z"/><path class="b" d="M46 28h6v4h-6z"/></symbol>
  <symbol id="min" viewBox="0 0 20 20"><path fill="#fff" stroke="#5f5f5f" stroke-width="2" d="M1 1h18v6H1z"/></symbol>
  <symbol id="max" viewBox="0 0 20 20"><path fill="#fff" stroke="#5f5f5f" stroke-width="2" d="M1 1h18v18H1zM1 5h18"/></symbol>
  <symbol id="chd" viewBox="0 0 16 16"><path fill="none" stroke="#7c7c7c" stroke-width="2.600" d="M1 4l7 8 7-8"/></symbol>
  <symbol id="chr" viewBox="0 0 16 16"><path fill="none" stroke="#7c7c7c" stroke-width="2.600" d="M5 1l8 7-8 7"/></symbol>
  <symbol id="curve" viewBox="0 0 70 46" preserveAspectRatio="none"><path fill="none" stroke="#a0a0a0" stroke-width="2" d="M0 0C30 4 32 42 70 45"/></symbol>
</svg>

<header class="toolbars">
  <div class="bar">
    <div class="box box-a">
      <svg class="ic"><use href="#new"/></svg><svg class="ic"><use href="#builder"/></svg><svg class="ic blue"><use href="#open"/></svg><svg class="ic"><use href="#save"/></svg><i class="sep"></i>
      <svg class="ic"><use href="#undo"/></svg><svg class="ic"><use href="#redo"/></svg><i class="sep"></i>
      <svg class="ic"><use href="#refresh"/></svg><i class="sep"></i>
      <svg class="ic"><use href="#book"/></svg><svg class="ic"><use href="#help"/></svg>
    </div>
    <div class="box box-b">
      <svg class="ic"><use href="#runstack"/></svg><i class="caret off"></i><svg class="ic"><use href="#rundoc"/></svg><i class="caret off"></i><svg class="ic"><use href="#rundoc2"/></svg><i class="caret off"></i><svg class="ic"><use href="#stop"/></svg><i class="sep"></i>
      <span class="lbl w166">Afferent Fiber</span><i class="caret"></i><svg class="ic"><use href="#comp"/></svg><i class="caret"></i><i class="sep"></i>
      <svg class="ic"><use href="#pi"/></svg><i class="caret"></i><svg class="ic"><use href="#aeq"/></svg><i class="caret"></i><svg class="ic"><use href="#fx"/></svg><i class="caret"></i><svg class="ic"><use href="#pi"/></svg><i class="sep"></i>
      <svg class="ic"><use href="#geomblk"/></svg><svg class="ic"><use href="#winred"/></svg><svg class="ic"><use href="#cycle"/></svg><i class="caret off"></i><i class="sep"></i>
      <svg class="ic"><use href="#matsadd"/></svg><i class="sep"></i>
      <span class="lbl w180">Cable Equation</span><i class="caret"></i><svg class="ic"><use href="#atomadd"/></svg><svg class="ic"><use href="#atommulti"/></svg><svg class="ic"><use href="#winblue"/></svg><i class="sep"></i>
      <svg class="ic"><use href="#meshblk"/></svg><span class="lbl w94">Mesh 1</span><i class="caret"></i><i class="sep"></i>
      <svg class="ic"><use href="#teq"/></svg><span class="lbl w98">Study 1</span><i class="caret"></i><svg class="ic"><use href="#studyadd"/></svg><i class="sep"></i>
      <span class="lbl w374">Example of Response to Envelope</span><i class="caret"></i><svg class="ic"><use href="#results"/></svg><i class="caret"></i>
    </div>
  </div>
  <div class="bar">
    <div class="box box-c">
      <div class="rib on t1"><svg class="ic"><use href="#defs"/></svg>Definitions</div>
      <div class="rib t2"><svg class="ic"><use href="#geom"/></svg>Geometry</div>
      <div class="rib t3"><svg class="ic"><use href="#mats"/></svg>Materials</div>
      <div class="rib t4"><svg class="ic"><use href="#atom"/></svg>Physics</div>
      <div class="rib t5"><svg class="ic"><use href="#mesh"/></svg>Mesh</div>
      <div class="rib t6"><svg class="ic"><use href="#study"/></svg>Study</div>
      <div class="rib t7"><svg class="ic"><use href="#resdoc"/></svg>Results</div>
      <div class="rib t8"><svg class="ic"><use href="#devdoc"/></svg>Developer</div>
    </div>
    <div class="box box-d">
      <svg class="ic"><use href="#aeq"/></svg><i class="sep"></i>
      <svg class="ic"><use href="#fxq"/></svg><svg class="ic"><use href="#interp"/></svg><svg class="ic"><use href="#piece"/></svg><svg class="ic"><use href="#fx"/></svg><i class="caret"></i><i class="sep"></i>
      <svg class="ic"><use href="#sel1"/></svg><svg class="ic"><use href="#sel2"/></svg><svg class="ic"><use href="#sel3"/></svg><svg class="ic"><use href="#sel4"/></svg><svg class="ic"><use href="#sel5"/></svg><svg class="ic"><use href="#sel6"/></svg><svg class="ic"><use href="#sel7"/></svg><svg class="ic"><use href="#sel8"/></svg><svg class="ic"><use href="#sel9"/></svg><svg class="ic"><use href="#blob"/></svg><i class="caret off"></i><i class="sep"></i>
      <svg class="ic"><use href="#probe"/></svg><svg class="ic"><use href="#probe2"/></svg><i class="caret"></i><i class="sep"></i>
      <svg class="ic"><use href="#atoma"/></svg><i class="caret"></i><i class="sep"></i>
      <svg class="ic"><use href="#link"/></svg><i class="caret"></i><svg class="ic"><use href="#pair"/></svg><i class="caret"></i><i class="sep"></i>
      <svg class="ic"><use href="#zyx"/></svg><i class="caret"></i><svg class="ic"><use href="#wavep"/></svg><svg class="ic"><use href="#infp"/></svg><svg class="ic"><use href="#peak"/></svg><i class="sep"></i>
      <svg class="ic"><use href="#meshmap"/></svg><i class="caret"></i><svg class="ic"><use href="#cab"/></svg><i class="caret"></i><i class="sep"></i>
      <svg class="ic"><use href="#ask"/></svg><i class="caret"></i><i class="sep"></i>
      <svg class="ic"><use href="#axes"/></svg>
    </div>
  </div>
</header>

<main class="work">
  <section class="panel left">
    <div class="tabs">
      <div class="tab active"><svg class="ti"><use href="#crane"/></svg><span>Model Builder</span></div>
      <svg class="curve" viewBox="0 0 70 46"><defs><linearGradient id="tg" x1="0" y1="0" x2="0" y2="1"><stop offset="0" stop-color="#fbfdff"/><stop offset="1" stop-color="#dce9f7"/></linearGradient></defs><path fill="url(#tg)" d="M0 0C30 4 32 42 70 46H0z"/><use href="#curve"/></svg>
      <div class="fill"><svg class="wb"><use href="#min"/></svg><svg class="wb"><use href="#max"/></svg></div>
    </div>
    <div class="treebar">
      <svg class="ic"><use href="#aleft"/></svg><svg class="ic"><use href="#aright"/></svg><svg class="ic blue"><use href="#aup"/></svg><svg class="ic blue"><use href="#adown"/></svg><svg class="ic"><use href="#eyesm"/></svg><svg class="ic"><use href="#lup"/></svg><i class="caret off"></i><svg class="ic"><use href="#ldown"/></svg><i class="caret off"></i><svg class="ic"><use href="#cols"/></svg><i class="caret off"></i>
    </div>
    <div class="tree">
      <div class="row l0"><svg class="ch"><use href="#chd"/></svg><svg class="ni"><use href="#root"/></svg><span>Stim_100Hz.mph <em>(root)</em></span></div>
      <div class="row l1"><svg class="ch"><use href="#chd"/></svg><svg class="ni"><use href="#globe"/></svg><span>Global Definitions</span></div>
      <div class="row l2"><i class="ch"></i><svg class="ni"><use href="#pi"/></svg><span>Synapse Properties</span></div>
      <div class="row l2 sel"><i class="ch"></i><svg class="ni"><use href="#pisel"/></svg><span>Fiber Properties</span></div>
      <div class="row l2"><i class="ch"></i><svg class="ni"><use href="#pi"/></svg><span>Study Properties</span></div>
      <div class="row l2"><i class="ch"></i><svg class="ni"><use href="#pi"/></svg><span>Stimulus Properties</span></div>
      <div class="row l2 dis"><i class="ch"></i><svg class="ni"><use href="#matlab"/></svg><span>Matlab Functions for generating EPSC</span></div>
      <div class="row l2"><i class="ch"></i><svg class="ni blue"><use href="#wave"/></svg><span>Freq1 <em>(wv1)</em></span></div>
      <div class="row l2 dis"><i class="ch"></i><svg class="ni gray"><use href="#wave"/></svg><span>Freq2 <em>(wv2)</em></span></div>
      <div class="row l2"><i class="ch"></i><svg class="ni"><use href="#fxq"/></svg><span>stimulusFn - Envelope by addings two freq. <em>(</em></span></div>
      <div class="row l2"><i class="ch"></i><svg class="ni"><use href="#piece"/></svg><span>Piecewise 1 <em>(pw1)</em></span></div>
      <div class="row l2"><i class="ch"></i><svg class="ni"><use href="#matc"/></svg><span>Materials</span></div>
      <div class="row l1"><svg class="ch"><use href="#chd"/></svg><svg class="ni"><use href="#line"/></svg><span>Afferent Fiber <em>(comp2)</em></span></div>
      <div class="row l2"><svg class="ch"><use href="#chr"/></svg><svg class="ni"><use href="#defs"/></svg><span>Definitions</span></div>
      <div class="row l2"><svg class="ch"><use href="#chd"/></svg><svg class="ni"><use href="#geombox"/></svg><span>Afferent Fiber</span></div>
      <div class="row l3"><i class="ch"></i><svg class="ni"><use href="#fsec"/></svg><span>Fiber Sections <em>(i1)</em></span></div>
      <div class="row l3"><i class="ch"></i><svg class="ni"><use href="#union"/></svg><span>Form Union <em>(fin)</em></span></div>
      <div class="row l2"><i class="ch"></i><svg class="ni"><use href="#mats"/></svg><span>Materials</span></div>
      <div class="row l2"><svg class="ch"><use href="#chd"/></svg><svg class="ni"><use href="#du"/></svg><span>Cable Equation <em>(c)</em></span></div>
      <div class="row l3"><i class="ch"></i><svg class="ni"><use href="#dline"/></svg><span>Cable Equation PDE</span></div>
      <div class="row l3"><i class="ch"></i><svg class="ni"><use href="#dpoint"/></svg><span>Zero Flux 1</span></div>
      <div class="row l3"><i class="ch"></i><svg class="ni"><use href="#dline"/></svg><span>Initial Values 1</span></div>
      <div class="row l2"><svg class="ch"><use href="#chd"/></svg><svg class="ni"><use href="#ddt"/></svg><span>Channel Kinetics <em>(dode)</em></span></div>
      <div class="row l3"><i class="ch"></i><svg class="ni"><use href="#dline"/></svg><span>Distributed ODE 1</span></div>
      <div class="row l3"><i class="ch"></i><svg class="ni"><use href="#dline"/></svg><span>Initial Values 1</span></div>
      <div class="row l2"><i class="ch"></i><svg class="ni"><use href="#meshg"/></svg><span>Mesh 1</span></div>
      <div class="row l1"><svg class="ch"><use href="#chr"/></svg><svg class="ni"><use href="#study"/></svg><span>Study 1</span></div>
      <div class="row l1"><svg class="ch"><use href="#chr"/></svg><svg class="ni"><use href="#results"/></svg><span>Results</span></div>
    </div>
  </section>

  <section class="panel mid">
    <div class="tabs">
      <div class="tab"><svg class="ti"><use href="#setico"/></svg><span>Settings</span></div>
      <svg class="curve"><use href="#curve"/></svg>
      <div class="fill"><svg class="wb"><use href="#min"/></svg><svg class="wb"><use href="#max"/></svg></div>
    </div>
    <div class="subtitle">Parameters</div>
    <div class="labelrow"><span>Label:</span><div class="input">Fiber Properties</div></div>
    <div class="sect open"><i class="tri down"></i><span>Parameters</span></div>
    <div class="ptable">
      <div class="prow phead"><span>Name</span><span>Expression</span><span>Value</span><span>Description</span></div>
      <div class="pbody">
        <div class="prow"><span>fiberLength</span><span>425</span><span>425</span><span>Distance from base of calyx</span></div>
        <div class="prow"><span>hnS</span><span>8</span><span>8</span><span>[um] HN Starting point, dista</span></div>
        <div class="prow"><span>hnE</span><span>9</span><span>9</span><span>[um] HN Ending point, distan</span></div>
        <div class="prow"><span>n1S</span><span>80</span><span>80</span><span>[um] N1 Starting point, dista</span></div>
        <div class="prow"><span>n1E</span><span>82</span><span>82</span><span>[um] N1 Ending point, distan</span></div>
        <div class="prow"><span>n2S</span><span>n1E+300</span><span>382</span><span>[um] N2 Starting point, dista</span></div>
        <div class="prow"><span>n2E</span><span>n2S+2</span><span>384</span><span>[um] N2 Ending point, distan</span></div>
        <div class="prow"><span>radiusf</span><span>1.5</span><span>1.5</span><span>[um] Fiber radius. Lysakows</span></div>
        <div class="prow"><span>areaUnMyel</span><span>hnS*2*radiusf</span><span>24</span><span></span></div>
        <div class="prow"><span>V_in_EMvelp</span><span>50</span><span>50</span><span>Amplitude of the EMvelop si</span></div>
        <div class="prow"><span></span><span></span><span></span><span></span></div>
      </div>
    </div>
    <div class="ptools">
      <svg class="ic pale"><use href="#aup"/></svg><svg class="ic pale"><use href="#adown"/></svg><svg class="ic"><use href="#insert"/></svg><i class="caret off"></i><svg class="ic"><use href="#clearl"/></svg><svg class="ic"><use href="#broom"/></svg><svg class="ic amber"><use href="#open"/></svg><svg class="ic"><use href="#save"/></svg><svg class="ic"><use href="#rename"/></svg><i class="caret off"></i>
    </div>
    <div class="field"><span>Name:</span><div class="input"></div></div>
    <div class="field"><span>Expression:</span><div class="input"></div></div>
    <div class="field"><span>Description:</span><div class="input"></div></div>
    <div class="sect shut"><i class="tri right"></i><span>Visibility</span></div>
  </section>

  <div class="side">
    <section class="panel gfx">
      <div class="tabs">
        <div class="tab"><svg class="ti"><use href="#gfx"/></svg><span>Graphics</span></div>
        <svg class="curve"><use href="#curve"/></svg>
        <div class="fill"><svg class="wb"><use href="#min"/></svg><svg class="wb"><use href="#max"/></svg></div>
      </div>
      <div class="gbar">
        <div class="grow">
          <svg class="big"><use href="#zin"/></svg><svg class="big"><use href="#zout"/></svg><svg class="big"><use href="#zbox"/></svg><i class="caret"></i><svg class="big"><use href="#zext"/></svg><svg class="big"><use href="#zsel"/></svg><i class="sep"></i>
          <svg class="big"><use href="#bigaxes"/></svg><i class="caret"></i><i class="sep"></i>
          <svg class="big"><use href="#l1"/></svg><svg class="big on"><use href="#l2"/></svg><svg class="big"><use href="#l3"/></svg><svg class="big"><use href="#l4"/></svg><svg class="big"><use href="#l5"/></svg><i class="sep"></i>
          <svg class="big"><use href="#r1"/></svg><i class="caret off"></i><svg class="big"><use href="#r2"/></svg><svg class="big on"><use href="#r3"/></svg><svg class="big"><use href="#r4"/></svg><i class="caret off"></i>
        </div>
        <div class="grow">
          <svg class="big"><use href="#q1"/></svg><svg class="big on"><use href="#q2"/></svg><svg class="big"><use href="#q3"/></svg><svg class="big"><use href="#q4"/></svg><i class="sep"></i>
          <svg class="big"><use href="#e1"/></svg><svg class="big"><use href="#e2"/></svg><svg class="big on"><use href="#e3"/></svg><svg class="big"><use href="#e4"/></svg><svg class="big"><use href="#e5"/></svg><i class="sep"></i>
          <svg class="big"><use href="#aperture"/></svg><i class="caret"></i><svg class="big"><use href="#camera"/></svg><svg class="big"><use href="#printer"/></svg>
        </div>
      </div>
      <svg class="plot" viewBox="0 0 1304 1014" role="img">
        <defs>
          <pattern id="minor" x="4" width="28.500" height="10" patternUnits="userSpaceOnUse"><path fill="#b9b9b9" d="M0 0h4v10H0z"/></pattern>
          <pattern id="major" x="32" width="142.500" height="20" patternUnits="userSpaceOnUse"><path fill="#555" d="M0 0h4v20H0z"/></pattern>
          <pattern id="major2" x="32" width="142.500" height="2000" patternUnits="userSpaceOnUse"><path fill="#808080" d="M0 0h4v2000H0z"/></pattern>
          <linearGradient id="logo"><stop offset=".3" stop-color="#f5ea50"/><stop offset=".75" stop-color="#3ab0d8"/><stop offset="1" stop-color="#2a50b8"/></linearGradient>
        </defs>
        <rect width="1304" height="8" fill="#fafbff"/>
        <rect y="4" width="1304" height="5" fill="url(#minor)"/><rect y="4" width="1304" height="5" fill="url(#major)"/>
        <rect y="8" width="1304" height="4" fill="#808080"/>
        <path fill="#f8f8f8" stroke="#e2e2e2" stroke-width="2" d="M1251 30l12-1 24-9 1 10 5 22-17 8-14-6z"/>
        <rect x="1260" y="28" width="28" height="22" rx="3" fill="#1626a0"/><path fill="url(#logo)" d="M1266 33h10l8 6-7 7h-11z"/>
        <path fill="#000" d="M56 492h1190v2H56zM56 490h6v6h-6zM258 490h12v6h-12zM1119 490h12v6h-12zM1242 490h6v6h-6z"/>
        <rect y="978" width="1304" height="5" fill="url(#minor)"/><rect y="978" width="1304" height="11" fill="url(#major2)"/>
        <rect y="974" width="1304" height="4" fill="#808080"/>
        <path d="M0 976l12 11H0z"/>
        <g class="ax"><text x="36" y="1006">0</text><text x="178" y="1006">50</text><text x="319" y="1006">100</text><text x="462" y="1006">150</text><text x="606" y="1006">200</text><text x="748" y="1006">250</text><text x="891" y="1006">300</text><text x="1033" y="1006">350</text><text x="1176" y="1006">400</text></g>
      </svg>
    </section>
    <section class="panel msgs">
      <div class="tabs">
        <div class="tab"><svg class="ti"><use href="#mail"/></svg><span>Messages</span><svg class="x"><use href="#xclose"/></svg></div>
        <svg class="curve"><use href="#curve"/></svg>
        <div class="otab o1"><svg class="ti"><use href="#prog"/></svg><span>Progress</span></div>
        <div class="otab o2"><svg class="ti"><use href="#log"/></svg><span>Log</span></div>
        <div class="otab o3"><svg class="ti"><use href="#table"/></svg><span>Table</span></div>
        <div class="fill"><svg class="wb"><use href="#min"/></svg><svg class="wb"><use href="#max"/></svg></div>
      </div>
      <div class="mbar"><svg class="ic"><use href="#broom"/></svg><svg class="ic on"><use href="#winmail"/></svg></div>
    </section>
  </div>
</main>
</body>
</html>
```
FILE: styles.css
```css
* { box-sizing: border-box; }
body {
  margin: 0;
  width: 2880px;
  height: 1452px;
  overflow: hidden;
  background: #fafbff;
  color: #000;
  font: 22.3px/30px Inter, "Liberation Sans", sans-serif;
  display: flex;
  flex-direction: column;
}
svg { display: block; flex: none; overflow: visible; }
em { font-style: italic; }
svg.defs { display: none; }

/* icon paint */
.b { fill: #4a8ec9; }
.w { fill: #fff; }
.f { fill: #f5f5f6; }
.f2 { fill: #f6f7fa; }
.f3 { fill: #ececec; }
.gf { fill: #8c8c8c; }
.dg { fill: #d6d6d7; }
.s2, .s3, .s5, .g2, .g2l, .g3, .gd, .gd2, .dg2, .k2, .cs { fill: none; }
.s2 { stroke: #5294d0; stroke-width: 2.2; }
.s3 { stroke: #4f92cf; stroke-width: 3; }
.s5 { stroke: #4a8ec9; stroke-width: 6; }
.k2 { stroke: #3d7fb5; stroke-width: 2.2; }
.g2 { stroke: #8c8c8c; stroke-width: 2; }
.g2l { stroke: #ababab; stroke-width: 2; }
.g3 { stroke: #8c8c8c; stroke-width: 4; }
.gd { stroke: #777; stroke-width: 2; }
.gd2 { stroke: #868686; stroke-width: 2.4; }
.dg2 { stroke: #d6d6d7; stroke-width: 2.2; }
.cs { stroke: currentColor; stroke-width: 2.2; }
.s2.w, .s3.w, .gd2.w { fill: #fff; }
.dg2.f { fill: #f3f3f4; }
.s2.f2, .gd.f2 { fill: #f6f7fa; }
.g2.f3 { fill: #ececec; }
path.s2[fill^="#"], path.s3[fill^="#"] { fill: #dbe8f4; }
path.s2[fill="#92c1e6"] { fill: #92c1e6; }
path.s2[fill="#dcddde"], path.s2[fill="#dfe3e8"] { fill: #dcdfe3; }
.dser { font: bold 15px "Liberation Serif", serif; fill: #222; }
.blue { color: #4a8ec9; }
.gray { color: #9a9a9a; }
.pale { color: #d6d6d7; }
.amber { color: #e8a850; }

/* toolbars */
.toolbars { padding-top: 1px; height: 108px; display: flex; flex-direction: column; gap: 9px; flex: none; }
.bar { display: flex; padding-left: 4px; gap: 16px; }
.box { height: 47px; border: 2px solid #e0e1e3; display: flex; align-items: center; }
.box-a { width: 436px; }
.box-c { width: 1152px; }
.ic { width: 44px; height: 32px; }
.caret { width: 16px; height: 10px; flex: none; }
.caret::before {
  content: "";
  display: block;
  margin-top: 1px;
  width: 10px;
  height: 9px;
  background: #000;
  clip-path: polygon(0 0, 100% 0, 50% 100%);
}
.caret.off::before { background: #bdbdbf; }
.sep { width: 12px; align-self: stretch; flex: none; background: linear-gradient(#e0e1e3, #e0e1e3) 6px 0 / 2px 100% no-repeat; }
.lbl { padding-left: 11px; white-space: nowrap; flex: none; }
.w166 { width: 166px; }
.w180 { width: 180px; }
.w94 { width: 94px; }
.w98 { width: 98px; }
.w374 { width: 374px; }
.rib { display: flex; align-items: center; gap: 3px; height: 43px; white-space: nowrap; }
.rib.on { background: #e4e5e7; box-shadow: inset 0 0 0 2px #bbbcbe; margin-right: 2px; }
.t1 { width: 170px; }
.t2 { width: 158px; gap: 0; }
.t3 { width: 153px; }
.t4 { width: 136px; gap: 2px; }
.t5 { width: 113px; }
.t6 { width: 118px; }
.t7 { width: 134px; }
.t8 { width: 164px; }

/* panels */
.work { display: flex; flex: 1; padding-left: 1px; min-height: 0; }
.panel { border: 2px solid #a0a0a0; border-bottom: 0; border-radius: 15px 15px 0 0; display: flex; flex-direction: column; overflow: hidden; }
.left { width: 623px; margin-right: 9px; }
.mid { width: 923px; margin-right: 9px; }
.side { flex: 1; display: flex; flex-direction: column; gap: 8px; }
.gfx { height: 1234px; border-bottom: 2px solid #a0a0a0; }
.msgs { flex: 1; }
.tabs { height: 46px; display: flex; flex: none; }
.tab { display: flex; align-items: center; gap: 8px; padding: 2px 0 0 5px; white-space: nowrap; flex: none; }
.tab.active { background: linear-gradient(#fbfdff, #dce9f7); }
.left .tab { width: 175px; }
.mid .tab { width: 118px; }
.gfx .tab { width: 123px; padding-left: 6px; }
.msgs .tab { width: 179px; }
.tab span { position: relative; z-index: 1; }
.ti { width: 32px; height: 32px; }
.x { width: 32px; height: 32px; margin-left: 4px; }
.curve { width: 70px; height: 46px; }
.fill { flex: 1; border-bottom: 2px solid #a0a0a0; display: flex; justify-content: flex-end; gap: 24px; padding: 10px 22px 0 0; }
.wb { width: 20px; height: 20px; }
.otab { display: flex; align-items: center; gap: 8px; padding-top: 2px; border-right: 2px solid #a0a0a0; border-bottom: 2px solid #a0a0a0; border-top-right-radius: 14px; white-space: nowrap; flex: none; }
.o1 { width: 130px; }
.o1 .ti { margin-left: -12px; }
.o2 { width: 96px; padding-left: 8px; }
.o3 { width: 114px; padding-left: 7px; }

/* model tree */
.treebar { height: 52px; margin: 0 5px 6px; display: flex; align-items: center; border-bottom: 2px solid #d9dadc; }
.treebar .ic:first-child { margin-left: -2px; }
.tree { flex: 1; margin: 0 5px 0 4px; background: #fff; border: 2px solid #e4e5e8; border-bottom: 0; overflow: hidden; }
.row { height: 34px; padding-bottom: 2px; display: flex; align-items: center; white-space: nowrap; }
.l0 { padding-left: 6px; }
.l1 { padding-left: 38px; }
.l2 { padding-left: 70px; }
.l3 { padding-left: 102px; }
.ch { width: 16px; height: 16px; flex: none; margin-right: 19px; }
.ni { width: 32px; height: 32px; margin-right: 4px; }
.sel { background: linear-gradient(#2464d9, #2464d9) 0 0 / 100% 32px no-repeat; color: #fff; }
.dis { color: #8b8b8c; }

/* settings */
.subtitle { padding: 3px 0 0 11px; height: 59px; }
.labelrow { display: flex; padding-left: 27px; height: 55px; }
.labelrow span { width: 79px; }
.input { height: 34px; border: 1px solid #ececee; border-bottom: 2px solid #c6c7c9; padding: 2px 6px; }
.labelrow .input { width: 788px; }
.sect { margin: 0 14px 0 13px; height: 50px; border: 2px solid #dfe9f5; border-bottom: 0; border-image: linear-gradient(#dfe9f5, #fafbff) 1; display: flex; padding: 3px 0 0 13px; gap: 17px; flex: none; }
.open { background: linear-gradient(#dde8f4, #fbfcff) 2px 11px / 884px 22px no-repeat, linear-gradient(#e1ebf5, #e1ebf5) 2px 33px / 884px 5px no-repeat; }
.tri { width: 14px; height: 30px; flex: none; background: #979797; }
.down { clip-path: polygon(0 12px, 14px 12px, 7px 21px); }
.right { clip-path: polygon(2px 7px, 10px 16px, 2px 25px); }
.ptable { width: 828px; height: 680px; margin: 16px 0 0 45px; border: 2px solid #e2e3e5; flex: none; display: flex; flex-direction: column; overflow: hidden; }
.prow { display: grid; grid-template-columns: 140px 204px 180px 300px; height: 42px; line-height: 40px; white-space: nowrap; }
.prow span { padding-left: 4px; overflow: hidden; border-right: 2px solid transparent; background-clip: padding-box; }
.prow span:last-child { border: 0; }
.phead { height: 56px; line-height: 56px; background: #fff; border-bottom: 2px solid #e2e3e5; }
.phead span { background: linear-gradient(#e2e3e5, #e2e3e5) 100% 12px / 2px 32px no-repeat; border: 0; }
.phead span:last-child { background: none; }
.pbody { flex: 1; background: linear-gradient(#e2e3e5, #e2e3e5) 138px 0 / 2px 100% no-repeat, linear-gradient(#e2e3e5, #e2e3e5) 342px 0 / 2px 100% no-repeat, linear-gradient(#e2e3e5, #e2e3e5) 522px 0 / 2px 100% no-repeat; }
.pbody .prow span:nth-child(3) { background-color: #f4f4f4; height: 40px; }
.ptools { display: flex; align-items: center; height: 36px; margin: 23px 0 0 36px; }
.field { padding-left: 37px; height: 86px; flex: none; }
.field span { display: block; padding: 0 0 0 3px; height: 41px; }
.field .input { width: 845px; border-color: #f6f7f9; border-bottom: 2px solid #e0e1e3; }
.ptools + .field { margin-top: 15px; }
.shut { height: 40px; margin-top: 10px; background: linear-gradient(#e3ecf7, #fbfcff) 2px 2px / 884px 18px no-repeat, linear-gradient(#dce8f4, #fafbff) 2px 20px / 884px 18px no-repeat; }

/* graphics */
.gbar { margin: 4px 4px 0 3px; height: 162px; border-bottom: 2px solid #d9dadc; flex: none; display: flex; flex-direction: column; gap: 4px; }
.grow { display: flex; align-items: center; height: 76px; }
.big { width: 76px; height: 76px; }
.on { background: #e4e5e7; }
.big.on { box-shadow: inset 0 0 0 2px #bbbcbe; }
.gfx .sep { background-position: 5px 0; }
.plot { margin: 0 0 0 3px; width: 1304px; height: 1014px; background: #fff; }
.ax { font: 21px "DejaVu Sans", sans-serif; fill: #111; }
.mbar { display: flex; align-items: center; height: 53px; margin: 0 4px 0 3px; border-bottom: 2px solid #d9dadc; flex: none; }
.mbar .ic { height: 44px; padding: 6px; }
.mbar .on { box-shadow: inset 0 0 0 2px #bbbcbe; }
```
